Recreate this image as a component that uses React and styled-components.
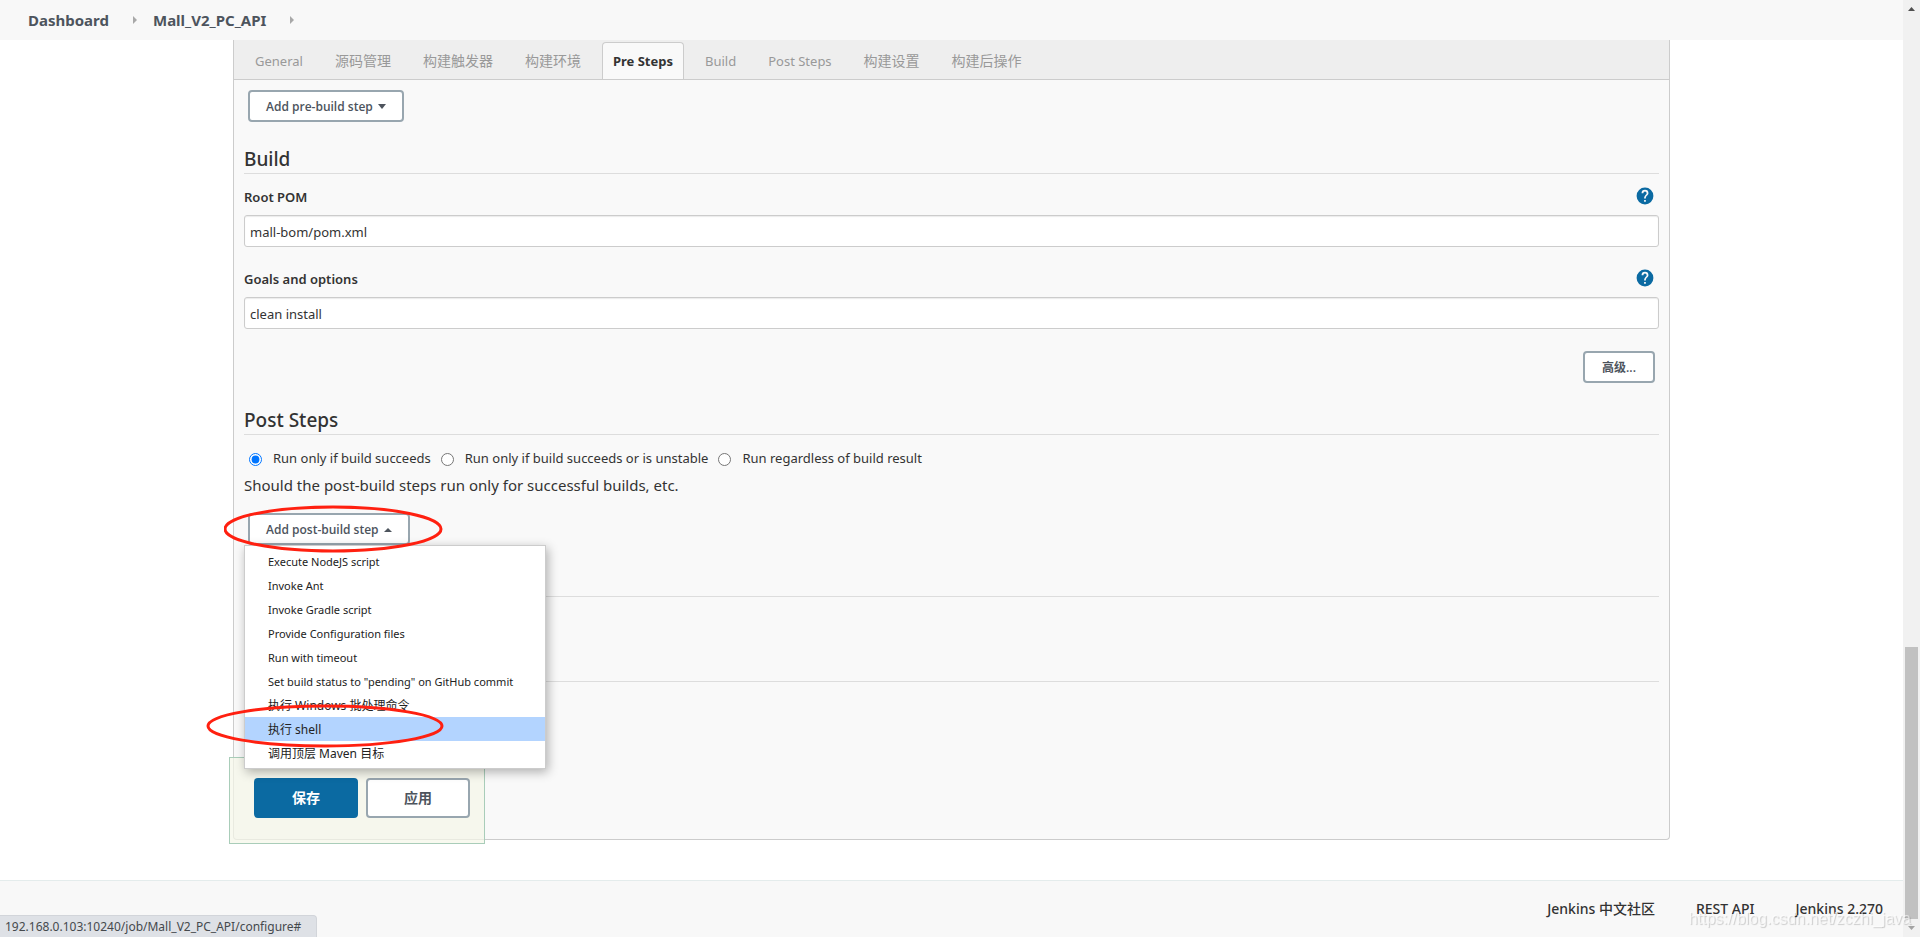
import { useState } from 'react';
import styled, { createGlobalStyle } from 'styled-components';

const GlobalStyle = createGlobalStyle`
  * {
    box-sizing: border-box;
  }

  body {
    margin: 0;
    background: #fff;
    color: #333;
    font-family: 'Noto Sans', 'Noto Sans CJK SC', sans-serif;
    font-size: 13px;
    line-height: 20px;
  }

  button,
  input {
    font-family: inherit;
  }
`;

const Page = styled.div`
  display: flex;
  min-height: 100vh;
`;

const Content = styled.div`
  flex: 1;
  min-width: 0;
  display: flex;
  flex-direction: column;
`;

const Breadcrumbs = styled.nav`
  display: flex;
  align-items: center;
  height: 40px;
  padding: 0 28px;
  background: #f8f8f8;
`;

const Crumb = styled.a`
  color: #4d545d;
  font-size: 15px;
  font-weight: 700;
  text-decoration: none;
`;

const CrumbArrow = styled.svg`
  width: 4px;
  height: 8px;
  margin: 0 16px 0 24px;
  fill: #a8a8a8;
`;

const Main = styled.main`
  flex: 1;
  padding: 0 233px 40px;
`;

const Panel = styled.form`
  position: relative;
  border: 1px solid #ccc;
  border-top: none;
  border-radius: 0 0 4px 4px;
  background: #f9f9f9;
`;

const TabBar = styled.div`
  display: flex;
  align-items: flex-end;
  gap: 10px;
  height: 40px;
  padding: 0 10px;
  border-bottom: 1px solid #ccc;
  background: #eee;
`;

const Tab = styled.button`
  height: 37px;
  padding: 0 10px;
  border: 1px solid ${(props) => (props.$active ? '#ccc' : 'transparent')};
  border-bottom: none;
  border-radius: 4px 4px 0 0;
  background: ${(props) => (props.$active ? '#f9f9f9' : 'transparent')};
  color: ${(props) => (props.$active ? '#333' : '#999')};
  font-size: ${(props) => (props.$cjk ? '14px' : '13px')};
  font-weight: ${(props) => (props.$active ? 700 : 400)};
  line-height: 18px;
  white-space: nowrap;
  cursor: pointer;
`;

const FormBody = styled.div`
  padding: 10px 10px 157px;
`;

const StepButton = styled.button`
  display: inline-flex;
  align-items: center;
  justify-content: center;
  gap: 5px;
  min-width: 72px;
  height: 32px;
  padding: 0 16px;
  border: 2px solid #98a6af;
  border-radius: 4px;
  background: #fff;
  color: #4d545d;
  font-family: 'Open Sans', 'Noto Sans CJK SC', sans-serif;
  font-size: 12px;
  font-weight: 600;
  white-space: nowrap;
  cursor: pointer;
`;

const Caret = styled.svg`
  width: 8px;
  height: 5px;
  fill: #4d545d;
`;

const StepRow = styled.div`
  position: relative;
  display: flex;
  padding: ${(props) => (props.$end ? '13px 4px 0' : '0 4px')};
  justify-content: ${(props) => (props.$end ? 'flex-end' : 'flex-start')};
`;

const SectionHeader = styled.h2`
  height: 28px;
  margin: 24px 0 0;
  border-bottom: 1px solid #ddd;
  font-size: 19px;
  font-weight: 500;
  line-height: 26px;
`;

const Divider = styled.hr`
  height: 1px;
  margin: 0 0 84px;
  border: none;
  background: #ddd;

  &:first-of-type {
    margin-top: 51px;
  }

  &:last-of-type {
    margin-bottom: 0;
  }
`;

const Field = styled.div`
  padding-top: 13px;
  margin-bottom: 9px;
`;

const FieldHead = styled.div`
  display: flex;
  align-items: flex-start;
  justify-content: space-between;
  height: 20px;
  padding-right: 5px;
`;

const FieldLabel = styled.label`
  font-weight: 600;
`;

const HelpLink = styled.a`
  display: flex;
`;

const TextInput = styled.input`
  display: block;
  width: 100%;
  height: 32px;
  margin-top: 8px;
  padding: 2px 5px 0;
  border: 1px solid #ccc;
  border-radius: 3px;
  background: #fff;
  box-shadow: inset 0 1px 1px rgba(0, 0, 0, 0.08);
  color: #333;
  font-size: 13px;
`;

const RadioRow = styled.div`
  display: flex;
  align-items: center;
  gap: 10px;
  padding: 13px 0 0 5px;
`;

const RadioLabel = styled.label`
  display: flex;
  align-items: center;
  gap: 11px;
`;

const Radio = styled.input`
  width: 13px;
  height: 13px;
  margin: 2px 0 0;
`;

const Description = styled.p`
  margin: 7px 0 18px;
  font-size: 15px;
`;

const Menu = styled.ul`
  position: absolute;
  z-index: 2;
  top: 32px;
  left: 0;
  width: 302px;
  margin: 0;
  padding: 3px 0;
  border: 1px solid #ccc;
  background: #fff;
  box-shadow: 2px 3px 10px rgba(0, 0, 0, 0.3);
  list-style: none;
`;

const MenuItem = styled.li`
  height: 24px;
  padding: 1px 0 0 23px;
  background: ${(props) => (props.$selected ? '#b3d4ff' : 'transparent')};
`;

const MenuLink = styled.a`
  display: block;
  color: #222;
  font-size: ${(props) => (props.$cjk ? '12px' : '11px')};
  line-height: 24px;
  text-decoration: none;
`;

const Mark = styled.svg`
  position: absolute;
  z-index: 3;
  top: ${(props) => props.$top}px;
  left: ${(props) => props.$left}px;
  fill: none;
  stroke: #ff2010;
  stroke-width: 3px;
  pointer-events: none;
`;

const BottomBar = styled.div`
  position: absolute;
  z-index: 1;
  bottom: -5px;
  left: -5px;
  display: flex;
  gap: 8px;
  padding: 20px 14px 25px 24px;
  border: 1px solid #a9cdb9;
  background: rgba(245, 247, 232, 0.7);
`;

const SubmitButton = styled.button`
  width: 104px;
  height: 40px;
  padding: 0;
  border: 2px solid ${(props) => (props.$primary ? '#0b6aa2' : '#98a6af')};
  border-radius: 4px;
  background: ${(props) => (props.$primary ? '#0b6aa2' : '#fff')};
  color: ${(props) => (props.$primary ? '#fff' : '#4d545d')};
  font-size: 14px;
  font-weight: 700;
  line-height: 20px;
  cursor: pointer;
`;

const Footer = styled.footer`
  display: flex;
  align-items: center;
  justify-content: flex-end;
  gap: 41px;
  height: 57px;
  padding: 0 20px 0 0;
  border-top: 1px solid #e4ecec;
  background: #f8f8f8;
`;

const FooterLink = styled.a`
  color: #333;
  font-size: 14px;
  font-weight: 500;
  text-decoration: none;
`;

const ScrollTrack = styled.div`
  display: flex;
  flex-direction: column;
  align-items: center;
  width: 17px;
  padding: 7px 0;
  background: #f1f1f1;
`;

const ScrollArrow = styled.svg`
  width: 7px;
  height: 4px;
  fill: ${(props) => (props.$dim ? '#a3a3a3' : '#505050')};
`;

const ScrollThumb = styled.div`
  width: 13px;
  height: 272px;
  margin: auto 0 7px;
  background: #c1c1c1;
`;

const StatusBubble = styled.div`
  position: fixed;
  bottom: 0;
  left: 0;
  height: 22px;
  padding: 0 15px 0 5px;
  border: 1px solid #d2d5da;
  border-width: 1px 1px 0 0;
  border-radius: 0 4px 0 0;
  background: #dee1e6;
  color: #45494d;
  font-size: 12px;
  line-height: 22px;
`;

const Watermark = styled.div`
  position: fixed;
  right: 9px;
  bottom: 8px;
  color: rgba(255, 255, 255, 0.6);
  font-family: 'Liberation Sans', sans-serif;
  font-size: 16px;
  text-shadow: 1px 1px 1px rgba(0, 0, 0, 0.18);
`;

const tabs = [
  'General',
  '源码管理',
  '构建触发器',
  '构建环境',
  'Pre Steps',
  'Build',
  'Post Steps',
  '构建设置',
  '构建后操作',
];

const runConditions = [
  'Run only if build succeeds',
  'Run only if build succeeds or is unstable',
  'Run regardless of build result',
];

const steps = [
  'Execute NodeJS script',
  'Invoke Ant',
  'Invoke Gradle script',
  'Provide Configuration files',
  'Run with timeout',
  'Set build status to "pending" on GitHub commit',
  '执行 Windows 批处理命令',
  '执行 shell',
  '调用顶层 Maven 目标',
];

const isCjk = (text) => text.charCodeAt(0) > 255;

const HelpIcon = () => (
  <svg width='18' height='18' viewBox='0 0 24 24' fill='#0b6aa2'>
    <path d='M12 .8a11.2 11.2 0 1 0 0 22.4 11.2 11.2 0 0 0 0-22.4zm1.1 18.7h-2.3v-2.3h2.3v2.3zm2.4-8.9-1 1.1c-.9.9-1.4 1.7-1.4 3.5h-2.3v-.6c0-1.3.5-2.5 1.4-3.4l1.4-1.4c.4-.4.6-.9.6-1.6a2.2 2.2 0 0 0-4.4 0H7.4a4.6 4.6 0 0 1 9.2 0c0 1-.5 1.8-1.1 2.4z' />
  </svg>
);

const BreadcrumbArrow = () => (
  <CrumbArrow viewBox='0 0 4 8'>
    <path d='M0 0l4 4-4 4z' />
  </CrumbArrow>
);

const TextField = ({ id, label, value }) => (
  <Field>
    <FieldHead>
      <FieldLabel htmlFor={id}>{label}</FieldLabel>
      <HelpLink href='#' aria-label={`Help for ${label}`}>
        <HelpIcon />
      </HelpLink>
    </FieldHead>
    <TextInput id={id} type='text' defaultValue={value} />
  </Field>
);

export default function App() {
  const [activeTab, setActiveTab] = useState('Pre Steps');
  const [condition, setCondition] = useState(runConditions[0]);
  const [isOpen, setIsOpen] = useState(true);

  return (
    <>
      <GlobalStyle />
      <Page>
        <Content>
          <Breadcrumbs>
            <Crumb href='#'>Dashboard</Crumb>
            <BreadcrumbArrow />
            <Crumb href='#'>Mall_V2_PC_API</Crumb>
            <BreadcrumbArrow />
          </Breadcrumbs>
          <Main>
            <Panel onSubmit={(e) => e.preventDefault()}>
              <TabBar>
                {tabs.map((tab) => (
                  <Tab
                    key={tab}
                    type='button'
                    $active={tab === activeTab}
                    $cjk={isCjk(tab)}
                    onClick={() => setActiveTab(tab)}
                  >
                    {tab}
                  </Tab>
                ))}
              </TabBar>
              <FormBody>
                <StepRow>
                  <StepButton type='button'>
                    Add pre-build step
                    <Caret viewBox='0 0 8 5'>
                      <path d='M0 0h8L4 5z' />
                    </Caret>
                  </StepButton>
                </StepRow>

                <SectionHeader>Build</SectionHeader>
                <TextField id='pom' label='Root POM' value='mall-bom/pom.xml' />
                <TextField id='goals' label='Goals and options' value='clean install' />
                <StepRow $end>
                  <StepButton type='button'>高级...</StepButton>
                </StepRow>

                <SectionHeader>Post Steps</SectionHeader>
                <RadioRow>
                  {runConditions.map((item) => (
                    <RadioLabel key={item}>
                      <Radio
                        type='radio'
                        name='condition'
                        checked={item === condition}
                        onChange={() => setCondition(item)}
                      />
                      {item}
                    </RadioLabel>
                  ))}
                </RadioRow>
                <Description>
                  Should the post-build steps run only for successful builds, etc.
                </Description>
                <StepRow>
                  <StepButton type='button' onClick={() => setIsOpen(!isOpen)}>
                    Add post-build step
                    <Caret viewBox='0 0 8 5'>
                      <path d='M0 5h8L4 1z' />
                    </Caret>
                  </StepButton>
                  {isOpen ? (
                    <Menu>
                      {steps.map((step) => (
                        <MenuItem key={step} $selected={step === '执行 shell'}>
                          <MenuLink href='#' $cjk={isCjk(step)}>
                            {step}
                          </MenuLink>
                        </MenuItem>
                      ))}
                    </Menu>
                  ) : null}
                  <Mark $top={-9} $left={-20} width='220' height='50'>
                    <ellipse cx='109' cy='25' rx='108' ry='22' />
                  </Mark>
                  <Mark $top={191} $left={-38} width='240' height='44'>
                    <ellipse cx='119' cy='22' rx='117' ry='20' />
                  </Mark>
                </StepRow>

                <Divider />
                <Divider />
              </FormBody>
              <BottomBar>
                <SubmitButton $primary>保存</SubmitButton>
                <SubmitButton type='button'>应用</SubmitButton>
              </BottomBar>
            </Panel>
          </Main>
          <Footer>
            <FooterLink href='#'>Jenkins 中文社区</FooterLink>
            <FooterLink href='#'>REST API</FooterLink>
            <FooterLink href='#'>Jenkins 2.270</FooterLink>
          </Footer>
        </Content>
        <ScrollTrack>
          <ScrollArrow viewBox='0 0 7 4'>
            <path d='M0 4h7L3.5 0z' />
          </ScrollArrow>
          <ScrollThumb />
          <ScrollArrow $dim viewBox='0 0 7 4'>
            <path d='M0 0h7L3.5 4z' />
          </ScrollArrow>
        </ScrollTrack>
      </Page>
      <StatusBubble>192.168.0.103:10240/job/Mall_V2_PC_API/configure#</StatusBubble>
      <Watermark>https://blog.csdn.net/zczhi_java</Watermark>
    </>
  );
}
